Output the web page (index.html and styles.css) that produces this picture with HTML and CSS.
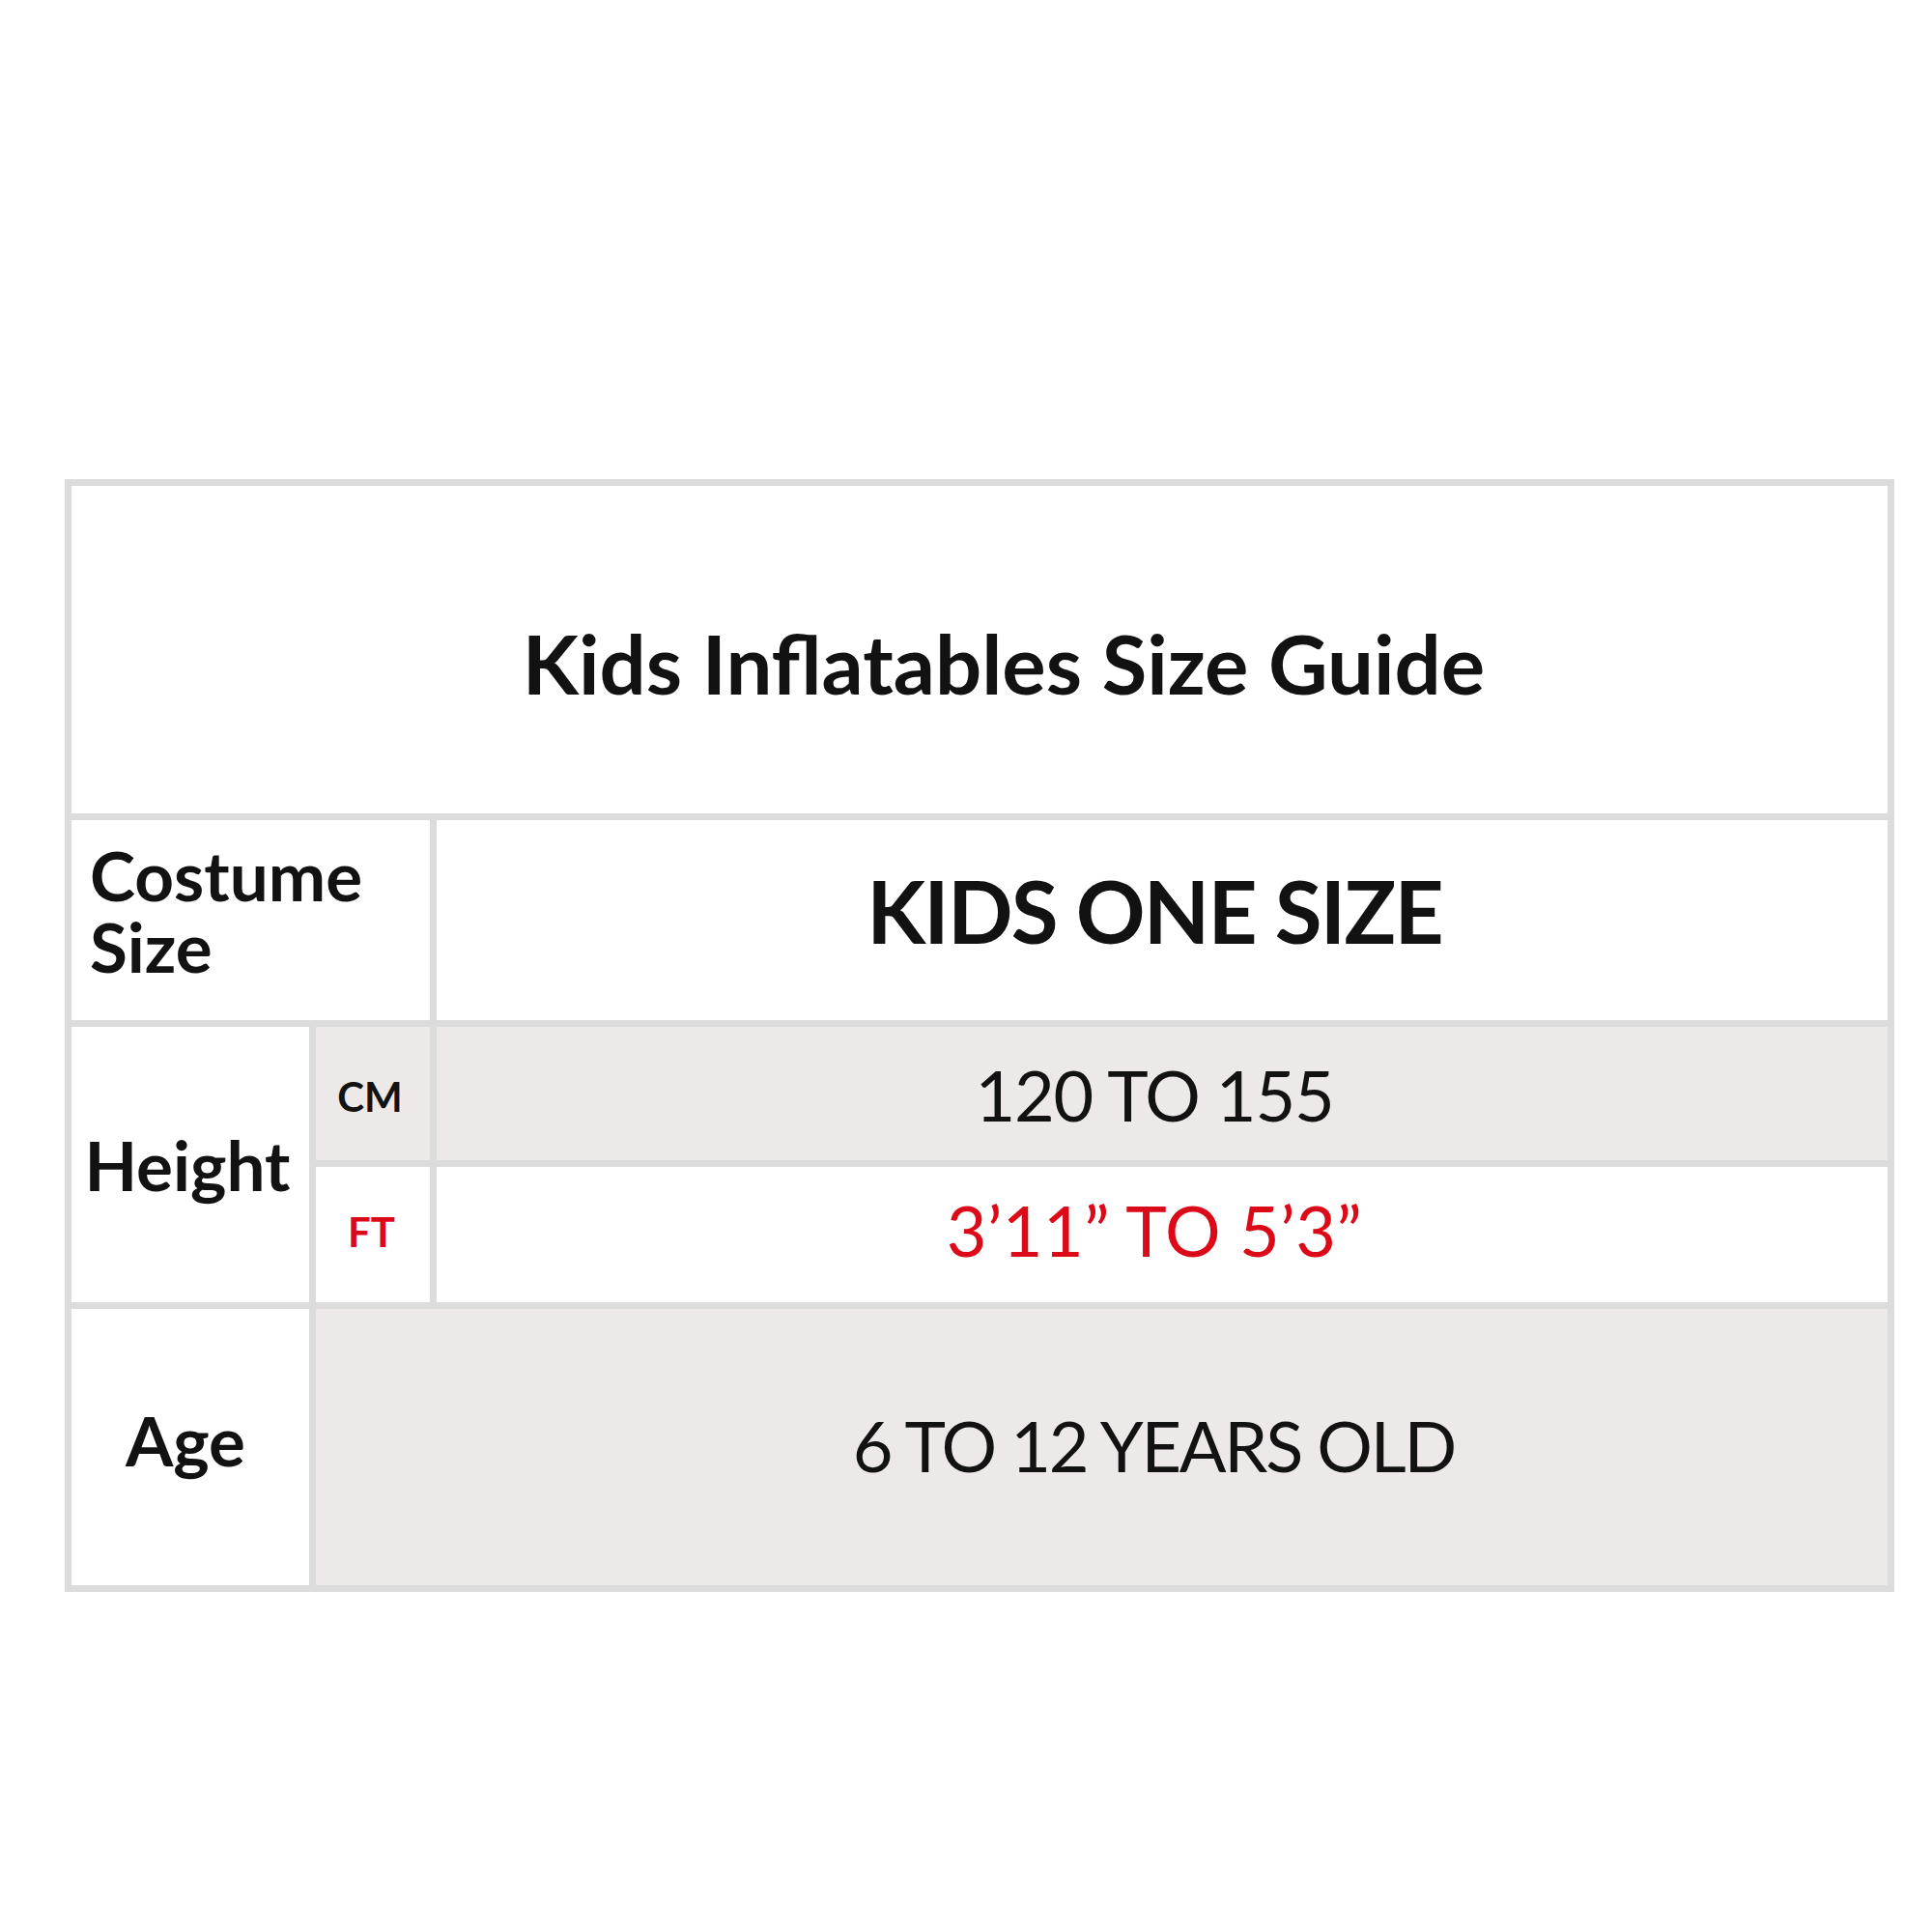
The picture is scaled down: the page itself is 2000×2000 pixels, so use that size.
FILE: index.html
```html
<!DOCTYPE html>
<html lang="en">
<head>
<meta charset="utf-8">
<title>Kids Inflatables Size Guide</title>
<link rel="stylesheet" href="styles.css">
</head>
<body>
<main class="page">
  <div class="chart">
    <div class="cell title-cell"><h1 class="title">Kids Inflatables Size Guide</h1></div>

    <div class="cell costume-label">
      <div class="label-stack">
        <span class="label line">Costume</span>
        <span class="label line">Size</span>
      </div>
    </div>
    <div class="cell value one-size"><span class="big">KIDS ONE SIZE</span></div>

    <div class="cell height-label"><span class="label">Height</span></div>
    <div class="cell unit unit-cm shaded"><span class="unit-text">CM</span></div>
    <div class="cell value value-cm shaded"><span class="val tight-1">120 TO 155</span></div>
    <div class="cell unit unit-ft"><span class="unit-text red">FT</span></div>
    <div class="cell value value-ft"><span class="val loose red">3’11” TO 5’3”</span></div>

    <div class="cell age-label"><span class="label">Age</span></div>
    <div class="cell value age-value shaded"><span class="val tight-2">6 TO 12 YEARS OLD</span></div>
  </div>
</main>
</body>
</html>
```

FILE: styles.css
```css
html, body {
  margin: 0;
  padding: 0;
  background: #ffffff;
}

.page {
  padding: 496px 0 0 67px;
  font-family: "Lato", "Open Sans", sans-serif;
  color: #121212;
}

.chart {
  display: grid;
  width: 1894px;
  box-sizing: border-box;
  grid-template-columns: 246px 118px 1502px;
  grid-template-rows: 339px 207px 138px 140px 286px;
  gap: 7px;
  padding: 7px;
  background: #dcdcdc;
}

.cell {
  background: #ffffff;
  display: flex;
  align-items: center;
  justify-content: center;
  box-sizing: border-box;
}

.shaded {
  background: #ece9e8;
}

.title-cell {
  grid-column: 1 / 4;
  grid-row: 1;
  padding: 28px 0 0 50px;
}

.title {
  margin: 0;
  font-size: 85px;
  font-weight: 700;
  line-height: 1;
  white-space: nowrap;
}

.costume-label {
  grid-column: 1 / 3;
  grid-row: 2;
  justify-content: flex-start;
  padding: 0 0 20px 19px;
}

.label-stack {
  display: flex;
  flex-direction: column;
  gap: 14px;
}

.label {
  font-weight: 700;
  font-size: 71px;
  line-height: 60px;
}

.height-label {
  grid-column: 1;
  grid-row: 3 / 5;
  padding-right: 6px;
}

.age-label {
  grid-column: 1;
  grid-row: 5;
  padding: 0 10px 14px 0;
}

.unit-text {
  font-weight: 700;
  font-size: 42px;
  line-height: 1;
}

.unit-cm {
  grid-column: 2;
  grid-row: 3;
  padding: 6px 6px 0 0;
}

.unit-ft {
  grid-column: 2;
  grid-row: 4;
  padding: 0 3px 6px 0;
}

.value {
  padding-right: 16px;
}

.one-size {
  grid-column: 3;
  grid-row: 2;
  padding-bottom: 20px;
}

.big {
  font-weight: 700;
  font-size: 89px;
  letter-spacing: -1.8px;
  line-height: 1;
  white-space: nowrap;
}

.val {
  font-weight: 400;
  font-size: 72px;
  line-height: 1;
  white-space: nowrap;
}

.tight-1 {
  letter-spacing: -1.2px;
}

.tight-2 {
  letter-spacing: -2.2px;
}

.loose {
  letter-spacing: 0.5px;
}

.value-cm {
  grid-column: 3;
  grid-row: 3;
  padding-top: 2px;
}

.value-ft {
  grid-column: 3;
  grid-row: 4;
  padding-bottom: 10px;
}

.age-value {
  grid-column: 2 / 4;
  grid-row: 5;
  padding: 0 16px 4px 124px;
}

.red {
  color: #dc0a18;
}
```
